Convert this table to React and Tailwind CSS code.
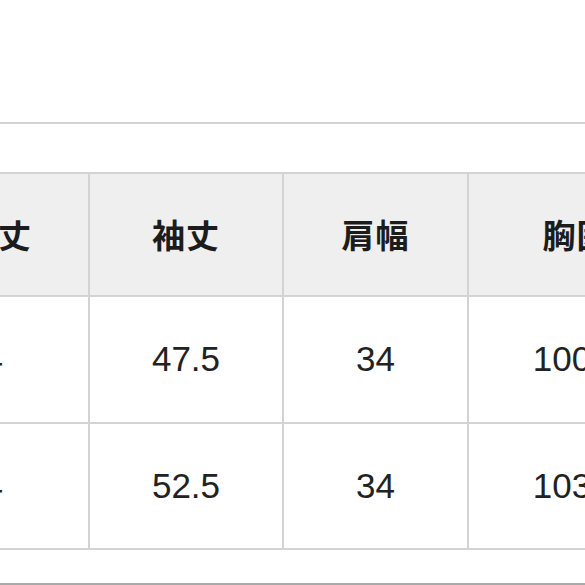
const headers = ['着丈', '袖丈', '肩幅', '胸囲']
const rows = [
  ['64', '47.5', '34', '100.5'],
  ['74', '52.5', '34', '103.5'],
]

const cellBase = 'flex items-center border-r-2 border-b-2 border-[#d3d3d3]'

export default function App() {
  return (
    <div
      className="w-[585px] h-[585px] overflow-hidden bg-white flex flex-col"
      style={{ fontFamily: '"Liberation Sans", "Noto Sans CJK JP", sans-serif' }}
    >
      <div className="h-[122px] shrink-0" />
      <div className="h-[2px] shrink-0 bg-[#d3d3d3]" />
      <div className="h-[48px] shrink-0" />

      {/* size table, left part cut off */}
      <div className="ml-[-92px] grid grid-cols-[182px_194px_185px_217px] w-[778px] shrink-0 border-t-2 border-[#d3d3d3]">
        {headers.map((h) => (
          <div
            key={h}
            className={`${cellBase} h-[123px] justify-center bg-[#efefef] text-[33px] font-bold text-[#1c1c1c] tracking-[1px]`}
            style={{ fontFamily: '"Noto Sans CJK JP", sans-serif' }}
          >
            {h}
          </div>
        ))}
        {rows.map((r, ri) =>
          r.map((v, ci) => (
            <div
              key={`${ri}-${ci}`}
              className={`${cellBase} ${ri === 0 ? 'h-[127px]' : 'h-[126px]'} ${
                ci === 0 ? 'justify-end pr-[85px]' : 'justify-center'
              } text-[35px] text-[#222]`}
            >
              {v}
            </div>
          ))
        )}
      </div>

      <div className="flex-1" />
      <div className="h-[2px] shrink-0 bg-[#a9a9a9]" />
    </div>
  )
}
